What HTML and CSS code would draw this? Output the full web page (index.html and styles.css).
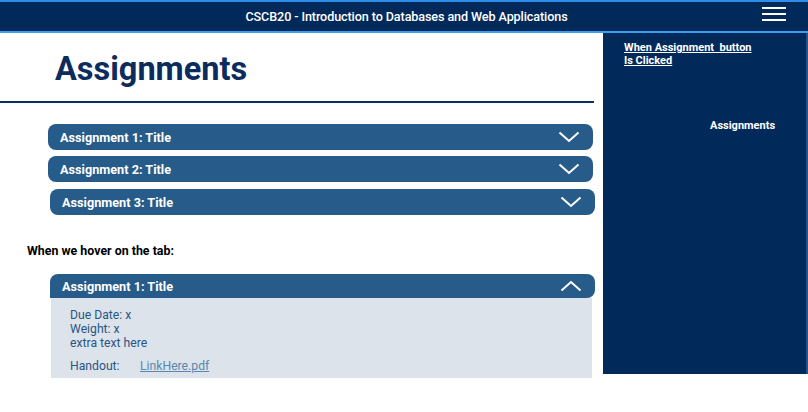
FILE: index.html
```
<!DOCTYPE html>
<html>
<head>
<meta charset="utf-8">
<link rel="stylesheet" href="styles.css">
</head>
<body>
<header class="topbar">
  <div class="topbar-title">CSCB20 - Introduction to Databases and Web Applications</div>
  <div class="burger"><span></span><span></span><span></span></div>
</header>
<div class="layout">
  <main class="content">
    <h1 class="page-title">Assignments</h1>
    <div class="rule"></div>
    <div class="acc-list">
      <div class="acc"><span>Assignment 1: Title</span>
        <svg class="chev" width="22" height="12" viewBox="0 0 22 12"><polyline points="1.5,1.5 11,10 20.5,1.5" fill="none" stroke="#fff" stroke-width="2"/></svg>
      </div>
      <div class="acc"><span>Assignment 2: Title</span>
        <svg class="chev" width="22" height="12" viewBox="0 0 22 12"><polyline points="1.5,1.5 11,10 20.5,1.5" fill="none" stroke="#fff" stroke-width="2"/></svg>
      </div>
      <div class="acc acc-shift"><span>Assignment 3: Title</span>
        <svg class="chev" width="22" height="12" viewBox="0 0 22 12"><polyline points="1.5,1.5 11,10 20.5,1.5" fill="none" stroke="#fff" stroke-width="2"/></svg>
      </div>
    </div>
    <p class="hover-note">When we hover on the tab:</p>
    <div class="open-acc">
      <div class="acc acc-open"><span>Assignment 1: Title</span>
        <svg class="chev" width="22" height="12" viewBox="0 0 22 12"><polyline points="1.5,10.5 11,2 20.5,10.5" fill="none" stroke="#fff" stroke-width="2"/></svg>
      </div>
      <div class="panel">
        <div class="panel-lines">
          <div>Due Date: x</div>
          <div>Weight: x</div>
          <div>extra text here</div>
        </div>
        <div class="handout"><span class="handout-label">Handout:</span><a class="handout-link" href="#">LinkHere.pdf</a></div>
      </div>
    </div>
  </main>
  <aside class="sidebar">
    <a class="side-link" href="#">When Assignment&nbsp; button<br>Is Clicked</a>
    <div class="side-item">Assignments</div>
  </aside>
</div>
</body>
</html>
```
FILE: styles.css
```
* { box-sizing: border-box; }
body {
  margin: 0;
  background: #fff;
  font-family: Roboto, "Liberation Sans", sans-serif;
}
.topbar {
  height: 33px;
  background: #012a5b;
  border-top: 2px solid #2f8fe8;
  border-bottom: 2px solid #3a9df0;
  display: flex;
  align-items: center;
  justify-content: center;
  position: relative;
}
.topbar-title {
  color: #fff;
  font-weight: 500;
  font-size: 12.6px;
  letter-spacing: -0.1px;
  padding-left: 5px;
}
.burger {
  position: absolute;
  right: 22px;
  top: 5px;
  width: 24px;
  display: flex;
  flex-direction: column;
  gap: 4px;
}
.burger span {
  display: block;
  height: 2px;
  background: #fff;
}
.layout {
  display: flex;
  align-items: flex-start;
}
.content {
  width: 603px;
  flex: none;
}
.page-title {
  margin: 0;
  padding: 17px 0 0 55px;
  height: 68px;
  font-size: 32.5px;
  font-weight: 700;
  color: #0b2c5c;
}
.rule {
  width: 594px;
  height: 2px;
  background: #0d2f5e;
}
.acc-list {
  padding: 21px 0 0 48px;
  display: flex;
  flex-direction: column;
  gap: 6px;
}
.acc {
  width: 545px;
  height: 26px;
  background: #275b89;
  border-radius: 8px;
  display: flex;
  align-items: center;
  justify-content: space-between;
  padding: 0 13px 0 12px;
  color: #fff;
  font-weight: 700;
  font-size: 12.7px;
}
.acc-shift { margin-left: 2px; margin-top: 1px; }
.chev { flex: none; }
.hover-note {
  margin: 28px 0 0 27px;
  font-size: 12.4px;
  font-weight: 700;
  color: #000;
}
.open-acc {
  margin: 16px 0 0 50px;
}
.acc-open {
  height: 24px;
  border-radius: 8px 8px 8px 0;
  position: relative;
  z-index: 1;
}
.panel {
  width: 541px;
  margin-left: 1px;
  height: 80px;
  background: #dce3eb;
  padding: 10px 0 0 19px;
  color: #2a5684;
  font-size: 12.2px;
  line-height: 14px;
}
.handout {
  margin-top: 9px;
  display: flex;
}
.handout-label { width: 70px; }
.handout-link {
  color: #5a88ad;
  text-decoration: underline;
}
.sidebar {
  width: 205px;
  height: 341px;
  background: #012a5b;
  border-right: 2px solid #24538a;
  padding: 8px 0 0 21px;
  display: flex;
  flex-direction: column;
}
.side-link {
  color: #fff;
  font-size: 11px;
  font-weight: 700;
  line-height: 13px;
  text-decoration: underline;
}
.side-item {
  margin: 52px 0 0 86px;
  color: #fff;
  font-size: 11px;
  font-weight: 700;
}
```
